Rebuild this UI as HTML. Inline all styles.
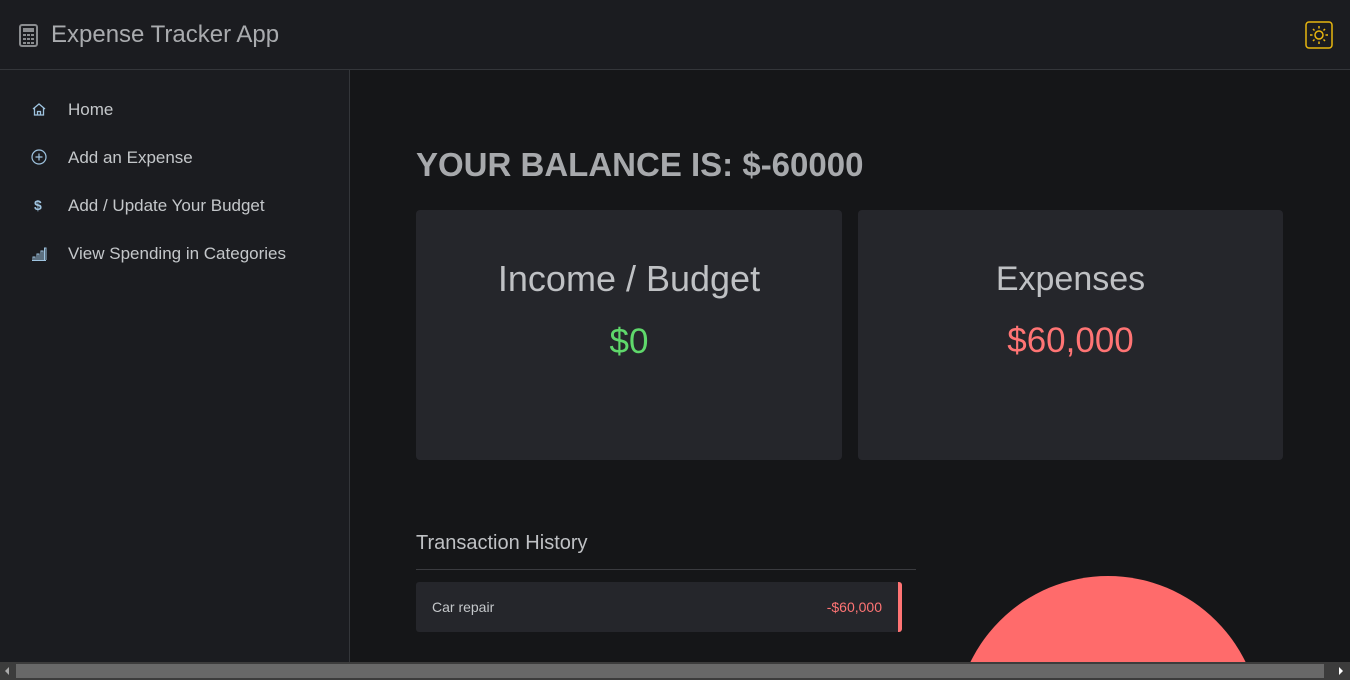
<!DOCTYPE html>
<html style="width:1350px;height:680px;overflow:hidden"><head><style>
*{margin:0;padding:0;box-sizing:border-box}
body{width:1350px;height:680px;overflow:hidden;background:#151618;font-family:"Liberation Sans",sans-serif;position:relative}
.top{position:absolute;left:0;top:0;width:1350px;height:70px;background:#1b1c20;border-bottom:1px solid #34363a}
.title{position:absolute;left:51px;top:21px;font-size:24px;color:#a9abae}
.side{position:absolute;left:0;top:70px;width:350px;height:592px;background:#1b1c20;border-right:1px solid #34363a}
.nav{position:absolute;left:68px;font-size:17px;color:#c4c7ca}
.ic{position:absolute;left:31px}
.bal{position:absolute;left:416px;top:146px;font-size:33px;font-weight:bold;color:#a7a9ac}
.card{position:absolute;top:210px;width:426px;height:250px;background:#25262b;border-radius:4px;text-align:center}
.card h2{font-weight:normal;font-size:34px;color:#bfc1c4;margin-top:50px}
.card p{font-size:35px;margin-top:22px}
</style></head><body>
<div class="top">
<svg style="position:absolute;left:19px;top:24px" width="19" height="23" viewBox="0 0 19 23"><rect x="1" y="1" width="17" height="21" rx="2" fill="none" stroke="#8a8c8f" stroke-width="2"/><rect x="4" y="4" width="11" height="4" fill="#8a8c8f"/><g fill="#8a8c8f"><rect x="4" y="10" width="3" height="2"/><rect x="8" y="10" width="3" height="2"/><rect x="12" y="10" width="3" height="2"/><rect x="4" y="14" width="3" height="2"/><rect x="8" y="14" width="3" height="2"/><rect x="12" y="14" width="3" height="2"/><rect x="4" y="18" width="3" height="2"/><rect x="8" y="18" width="3" height="2"/><rect x="12" y="18" width="3" height="2"/></g></svg>
<div class="title">Expense Tracker App</div>
<svg style="position:absolute;left:1305px;top:21px" width="28" height="28" viewBox="0 0 28 28"><rect x="1" y="1" width="26" height="26" rx="3" fill="none" stroke="#e8b60f" stroke-width="1.5"/><circle cx="14" cy="14" r="4" fill="none" stroke="#e8b60f" stroke-width="1.5"/><g stroke="#e8b60f" stroke-width="1.5"><line x1="14" y1="5" x2="14" y2="7.5"/><line x1="14" y1="20.5" x2="14" y2="23"/><line x1="5" y1="14" x2="7.5" y2="14"/><line x1="20.5" y1="14" x2="23" y2="14"/><line x1="8" y1="8" x2="9.5" y2="9.5"/><line x1="18.5" y1="18.5" x2="20" y2="20"/><line x1="8" y1="20" x2="9.5" y2="18.5"/><line x1="18.5" y1="9.5" x2="20" y2="8"/></g></svg>
</div>
<div class="side">
<svg class="ic" style="top:32px" width="16" height="15" viewBox="0 0 16 15"><path d="M2 7 L8 2 L14 7 M3.5 6 V13 H12.5 V6 M6.5 13 V9.5 H9.5 V13" fill="none" stroke="#9fc4e0" stroke-width="1.3"/></svg>
<div class="nav" style="top:30px">Home</div>
<svg class="ic" style="top:79px" width="16" height="16" viewBox="0 0 16 16"><circle cx="8" cy="8" r="7" fill="none" stroke="#9fc4e0" stroke-width="1.2"/><path d="M8 4.5V11.5M4.5 8H11.5" stroke="#9fc4e0" stroke-width="1.2"/></svg>
<div class="nav" style="top:78px">Add an Expense</div>
<div style="position:absolute;left:34px;top:127px;font-size:14px;font-weight:bold;color:#9fc4e0">$</div>
<div class="nav" style="top:126px">Add / Update Your Budget</div>
<svg class="ic" style="top:177px" width="16" height="14" viewBox="0 0 16 14"><path d="M1 13.5H15M2 13V10H4V13M6 13V7H8V13M10 13V4H12V13M13.5 13V1H15V13" fill="none" stroke="#9fc4e0" stroke-width="1"/></svg>
<div class="nav" style="top:174px">View Spending in Categories</div>
</div>
<div class="bal">YOUR BALANCE IS: $-60000</div>
<div class="card" style="left:416px"><h2 style="font-size:36px;margin-top:48px">Income / Budget</h2><p style="color:#5fd86b">$0</p></div>
<div class="card" style="left:858px;width:425px"><h2>Expenses</h2><p style="color:#ff7474">$60,000</p></div>
<div style="position:absolute;left:416px;top:532px;font-size:20px;color:#bfc1c4">Transaction History</div>
<div style="position:absolute;left:416px;top:569px;width:500px;height:1px;background:#3a3b3f"></div>
<div style="position:absolute;left:416px;top:582px;width:486px;height:50px;background:#25262b;border-radius:3px;border-right:4px solid #ff7474">
<span style="position:absolute;left:16px;top:17px;font-size:14px;color:#c4c7ca">Car repair</span>
<span style="position:absolute;right:16px;top:17px;font-size:14px;color:#ff7474">-$60,000</span></div>
<div style="position:absolute;left:0;top:0;width:1350px;height:662px;overflow:hidden">
<div style="position:absolute;left:955px;top:576px;width:306px;height:306px;border-radius:50%;background:#ff6b6b"></div></div>
<div style="position:absolute;left:0;top:662px;width:1350px;height:18px;background:#3c3c3c"></div>
<div style="position:absolute;left:16px;top:664px;width:1308px;height:14px;background:#686868"></div>
<div style="position:absolute;left:5px;top:667px;width:0;height:0;border-top:4px solid transparent;border-bottom:4px solid transparent;border-right:4px solid #aaa"></div>
<div style="position:absolute;left:1339px;top:667px;width:0;height:0;border-top:4px solid transparent;border-bottom:4px solid transparent;border-left:4px solid #fff"></div>
</body></html>
